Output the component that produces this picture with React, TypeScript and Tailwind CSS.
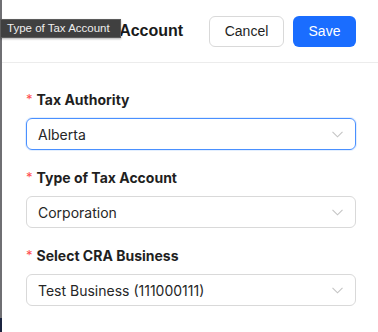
import React from 'react';

type FieldProps = {
  label: string;
  value: string;
  focused?: boolean;
};

const Chevron = () => (
  <svg width="11" height="7" viewBox="0 0 11 7" fill="none" className="shrink-0">
    <path d="M0.5 0.8 L5.5 5.8 L10.5 0.8" stroke="#c4c4c4" strokeWidth="1.1" />
  </svg>
);

const Field: React.FC<FieldProps> = ({ label, value, focused }) => (
  <div className="mb-4">
    <div className="flex items-center h-[22px] mb-2 text-[14px] font-bold text-[#1f1f1f]">
      <span className="text-[#ff4d4f] text-[13px] mr-[4px] font-normal leading-none">*</span>
      {label}
    </div>
    <div
      className={
        focused
          ? 'h-[32px] flex items-center justify-between pl-[11px] pr-[12px] rounded-[6px] border border-[#4a90ff] shadow-[0_0_0_1px_rgba(64,150,255,0.15)]'
          : 'h-[32px] flex items-center justify-between pl-[11px] pr-[12px] rounded-[6px] border border-[#d9d9d9]'
      }
    >
      <span className="text-[14px] text-[#262626]">{value}</span>
      <Chevron />
    </div>
  </div>
);

export default function App() {
  return (
    <div className="w-[378px] h-[332px] flex bg-white overflow-hidden font-['Inter',sans-serif]">
      <div className="w-[2px] flex flex-col shrink-0">
        <div className="flex-1 bg-[#6f6f73]" />
        <div className="h-[14px] bg-[#1b2440]" />
      </div>
      <div className="flex-1 relative">
        <div className="h-[63px] flex items-center justify-between pr-[22px] border-b border-[#ececec] font-['Liberation_Sans',Arial,sans-serif]">
          <h2 className="pl-[14px] text-[16px] font-bold text-[#1a1a1a]">Add New Tax Account</h2>
          <div className="flex gap-[9px]">
            <button
              type="button"
              className="h-[31px] w-[75px] rounded-[6px] border border-[#d9d9d9] bg-white text-[14px] text-[#1f1f1f]"
            >
              Cancel
            </button>
            <button
              type="button"
              className="h-[31px] w-[63px] rounded-[6px] bg-[#1a6dff] text-[14px] text-white"
            >
              Save
            </button>
          </div>
        </div>
        <div className="absolute left-[-2px] top-[19px] h-[19px] w-[121px] pl-[6px] flex items-center bg-[#404040] border border-[#5c5c5c] text-[11.5px] text-[#eeeeee] font-['Liberation_Sans',Arial,sans-serif] shadow-[0_1px_2px_rgba(0,0,0,0.3)]">
          Type of Tax Account
        </div>
        <div className="pt-[25px] pl-[24px] pr-[22px]">
          <Field label="Tax Authority" value="Alberta" focused />
          <Field label="Type of Tax Account" value="Corporation" />
          <Field label="Select CRA Business" value="Test Business (111000111)" />
        </div>
      </div>
    </div>
  );
}
